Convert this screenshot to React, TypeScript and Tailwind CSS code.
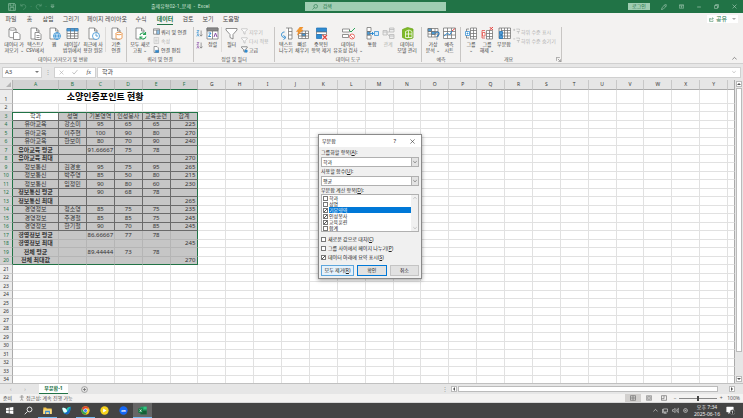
import { ReactNode } from 'react';

const COLS = 'ABCDEFGHIJKLMNOPQRSTUVWXY'.split('');

const ROWS: Record<number, string[]> = {
    3: ['학과', '성명', '기본영역', '인성봉사', '교육훈련', '합계'],
    4: ['유아교육', '강소미', '95', '65', '65', '225'],
    5: ['유아교육', '이주현', '100', '90', '80', '270'],
    6: ['유아교육', '한보미', '80', '70', '90', '240'],
    7: ['유아교육 평균', '', '91.66667', '75', '78', ''],
    8: ['유아교육 최대', '', '', '', '', '270'],
    9: ['정보통신', '김경호', '95', '75', '95', '265'],
    10: ['정보통신', '박주영', '85', '50', '80', '215'],
    11: ['정보통신', '임정민', '90', '80', '60', '230'],
    12: ['정보통신 평균', '', '90', '68', '78', ''],
    13: ['정보통신 최대', '', '', '', '', '265'],
    14: ['경영정보', '정소영', '85', '75', '75', '235'],
    15: ['경영정보', '주경철', '85', '85', '75', '245'],
    16: ['경영정보', '한기철', '90', '70', '85', '245'],
    17: ['경영정보 평균', '', '86.66667', '77', '78', ''],
    18: ['경영정보 최대', '', '', '', '', '245'],
    19: ['전체 평균', '', '89.44444', '73', '78', ''],
    20: ['전체 최대값', '', '', '', '', '270'],
};

const SUMMARY_ROWS = [7, 8, 12, 13, 17, 18, 19, 20];

const cx = (...classes: (string | false)[]) => classes.filter(Boolean).join(' ');

function Icon({ children, className = 'w-[13px] h-[13px]' }: { children: ReactNode; className?: string }) {
    return (
        <svg viewBox="0 0 26 26" className={cx('shrink-0', className)} fill="none" stroke="#707070" strokeWidth="1.5">
            {children}
        </svg>
    );
}

const Sheet = () => <path d="M4 2h11l5 5v17H4zM15 2v6h5" fill="#fff" />;

const icons = {
    database: (
        <Icon>
            <path d="M2 4v15c0 3 14 3 14 0V4" fill="#fff" />
            <ellipse cx="9" cy="4" rx="7" ry="2.5" fill="#fff" />
            <path d="M11 11h9l4 4v10H11z" fill="#fff" />
        </Icon>
    ),
    text: (
        <Icon>
            <Sheet />
            <path d="M12 11h8l4 4v10H12zM15 17h6M15 21h6" fill="#fff" />
        </Icon>
    ),
    web: (
        <Icon>
            <Sheet />
            <circle cx="18" cy="18" r="7" fill="#d9ecfa" stroke="#2e8bd0" />
            <path d="M11 18h14M18 11c-4 4-4 10 0 14c4-4 4-10 0-14" stroke="#2e8bd0" />
        </Icon>
    ),
    table: (
        <Icon>
            <path d="M2 3h22v20H2z" fill="#fff" />
            <path d="M2 3h22v5H2z" fill="#4a9bd8" stroke="#3a83bd" />
            <path d="M2 13h22M2 18h22M9 3v20M17 3v20" />
        </Icon>
    ),
    recent: (
        <Icon>
            <Sheet />
            <circle cx="18" cy="18" r="7" fill="#fff" stroke="#2e8bd0" />
            <path d="M18 13v5h4" stroke="#2e8bd0" />
        </Icon>
    ),
    connection: (
        <Icon>
            <Sheet />
            <path d="M12 13v9c0 3 12 3 12 0v-9" fill="#fff" stroke="#e8832a" />
            <ellipse cx="18" cy="13" rx="6" ry="2.5" fill="#fff" stroke="#e8832a" />
        </Icon>
    ),
    refresh: (
        <Icon>
            <Sheet />
            <path d="M10 10h14v15H10z" fill="#fff" stroke="none" />
            <path d="M12 16a6 6 0 0 1 11-1M24 19a6 6 0 0 1-11 2M23 10v5h-5M12 25v-5h5" stroke="#2ea35a" strokeWidth="2.2" />
        </Icon>
    ),
    sort: (
        <Icon>
            <path d="M2 2h22v22H2zM2 8h22M13 8v16" fill="#fff" />
            <path d="M2 2h22v5H2z" fill="#888" />
            <path d="M5 12h5l-5 7h5" stroke="#2e8bd0" strokeWidth="2" />
            <path d="M16 20l3-8 3 8" stroke="#8a4fa8" strokeWidth="2" />
        </Icon>
    ),
    filter: (
        <Icon>
            <path d="M2 3h22v3l-8 9v9l-6-3v-6L2 6z" fill="#fff" />
        </Icon>
    ),
    split: (
        <Icon>
            <path d="M12 2h12v22h-8M17 2v22M17 9h7M17 16h7" fill="#fff" />
            <path d="M9 10c-8 0-8 11 0 11M7 17l5 4-5 4" stroke="#2e8bd0" strokeWidth="2" />
        </Icon>
    ),
    flash: (
        <Icon>
            <path d="M5 8h20v15H5zM5 13h20M5 18h20M12 8v15M19 8v15" fill="#fff" />
            <path d="M12 13h7v5h-7z" fill="#4a9bd8" />
            <path d="M8 0h6l-4 6h4L3 16l2-7H1z" fill="#f39a2d" stroke="#e8832a" strokeWidth="1" />
        </Icon>
    ),
    duplicate: (
        <Icon>
            <path d="M3 2h20v8H3z" fill="#2e8bd0" stroke="#2473b5" />
            <path d="M3 10h20v5H3z" fill="#fff" />
            <path d="M3 15h10v8H3z" fill="#2e8bd0" stroke="#2473b5" />
            <path d="M15 16l9 9M24 16l-9 9" stroke="#e2453f" strokeWidth="2.2" />
        </Icon>
    ),
    validate: (
        <Icon>
            <path d="M1 4h14v6H1zM1 15h12v6H1z" fill="#fff" />
            <path d="M14 6l4 4 8-8" stroke="#2ea35a" strokeWidth="2" />
            <circle cx="20" cy="19" r="5" fill="#fff" stroke="#e2453f" />
            <path d="M16 16l7 7" stroke="#e2453f" />
        </Icon>
    ),
    consolidate: (
        <Icon>
            <path d="M2 1h8v8H2zM2 16h8v8H2z" fill="#fff" />
            <path d="M2 9h6v7H2z" fill="#4a9bd8" />
            <path d="M8 13h7M12 10l3 3-3 3" stroke="#2e8bd0" strokeWidth="2" />
            <path d="M17 9h8v8h-8z" fill="#d9ecfa" stroke="#2e8bd0" />
        </Icon>
    ),
    relation: (
        <Icon>
            <g stroke="#b5b5b5">
                <path d="M2 7h8v9H2zM2 10h8M15 2h9v8h-9zM15 5h9M15 15h9v8h-9zM15 18h9M10 10h5M10 13l5 6" fill="#eee" />
            </g>
        </Icon>
    ),
    model: (
        <Icon>
            <path d="M3 5l10-4 11 3v18l-11 3-10-4z" fill="#7fba28" stroke="#6aa31c" />
            <path d="M9 9l7-3 6 3v12H9zM9 14h13M15 7v14" stroke="#fff" strokeWidth="1.5" />
        </Icon>
    ),
    whatif: (
        <Icon>
            <path d="M2 3h20v17H2zM2 9h20M2 14h20M9 3v17M16 3v17" fill="#fff" />
            <path d="M2 3h7v6H2zM9 9h7v6H9z" fill="#4a9bd8" />
            <path d="M17 13c0-4 8-4 7 1c0 3-4 3-4 6M20 23v2" stroke="#2473b5" strokeWidth="2.2" />
        </Icon>
    ),
    forecast: (
        <Icon>
            <path d="M1 2h24v21H1zM1 9h24M1 16h24M9 2v21M17 2v21" fill="#fff" />
            <path d="M2 18l7-6 4 4 5-8" stroke="#2e8bd0" strokeWidth="2" />
            <path d="M18 8l6-5" stroke="#e2453f" strokeWidth="2" />
        </Icon>
    ),
    group: (
        <Icon>
            <path d="M11 2h12v22H11zM11 7h12M11 13h12M11 19h12M17 2v22" fill="#fff" />
            <path d="M8 4H3v18h5" />
            <path d="M1 9h8v8H1z" fill="#fff" stroke="#2e8bd0" />
            <path d="M3 13h4M5 11v4" stroke="#2e8bd0" />
        </Icon>
    ),
    ungroup: (
        <Icon>
            <path d="M11 7h12v17H11zM11 13h12M11 19h12M17 7v17" fill="#fff" />
            <path d="M8 7H2v15h6" stroke="#e2453f" />
            <path d="M3 11h5v7H3z" fill="#fff" stroke="#e2453f" />
            <path d="M17 0l7 6M24 0l-7 6" stroke="#e2453f" strokeWidth="2" />
        </Icon>
    ),
    subtotal: (
        <Icon>
            <path d="M7 2h18v21H7zM7 7h18M7 12h18M7 18h18M13 2v21M19 2v21" fill="#fff" />
            <path d="M7 2H2v21h5" />
            <path d="M3 9h6v6H3zM3 17h6v6H3z" fill="#4a9bd8" stroke="#2473b5" />
        </Icon>
    ),
};

function BigButton({ icon, lines, width, muted = false }: { icon: ReactNode; lines: string[]; width: string; muted?: boolean }) {
    return (
        <button className={cx('flex flex-col items-center shrink-0 whitespace-nowrap leading-[6px]', width, muted ? 'text-[#b0b0b0]' : 'text-[#444]')}>
            <span className="mb-[1px]">{icon}</span>
            {lines.map((line) => (
                <span key={line}>{line}</span>
            ))}
        </button>
    );
}

function SmallButton({ icon, label, muted = false }: { icon: ReactNode; label: string; muted?: boolean }) {
    return (
        <button className={cx('flex items-center gap-[1px] h-[9px] whitespace-nowrap', muted ? 'text-[#b0b0b0]' : 'text-[#444]')}>
            {icon}
            {label}
        </button>
    );
}

function Group({ title, width, children, launcher = false }: { title: string; width: string; children: ReactNode; launcher?: boolean }) {
    return (
        <section className={cx('flex flex-col shrink-0 justify-between border-r border-[#c8c6c4]', width)}>
            <div className="flex">{children}</div>
            <div className="flex items-center justify-center leading-[6px] text-[#555]">
                <span className={launcher ? 'flex-1 text-center' : ''}>{title}</span>
                {launcher && (
                    <Icon className="w-[5px] h-[5px]">
                        <path d="M2 20V2h18M10 10l13 13M24 12v12H12" strokeWidth="3" />
                    </Icon>
                )}
            </div>
        </section>
    );
}

const small = 'w-[7px] h-[7px]';

function SortArrow({ down }: { down: boolean }) {
    return (
        <Icon className={small}>
            <path d={down ? 'M3 2h8l-8 9h8M3 24l4-9 4 9' : 'M3 24l4-9 4 9M3 2h8l-8 9h8'} stroke={down ? '#2e8bd0' : '#8a4fa8'} strokeWidth="2.5" />
            <path d="M19 2v20M14 17l5 6 5-6" strokeWidth="2.5" />
        </Icon>
    );
}

function FilterIcon({ muted, dot }: { muted: boolean; dot?: boolean }) {
    return (
        <Icon className={small}>
            <path d="M2 3h21v3l-8 8v9l-5-3v-6L2 6z" stroke={muted ? '#b5b5b5' : '#555'} fill="#fff" strokeWidth="2.5" />
            {dot && <circle cx="19" cy="19" r="6" fill="#2e8bd0" stroke="none" />}
        </Icon>
    );
}

function DetailIcon({ plus }: { plus: boolean }) {
    return (
        <Icon className={small}>
            <path d={plus ? 'M1 7h7M4.500 3v8M12 4h12v5M14 13h11M20 13v8' : 'M1 7h7M12 4h12v5M14 13h11M20 13v8'} stroke="#b5b5b5" strokeWidth="2.5" />
        </Icon>
    );
}

function TitleBar() {
    return (
        <header className="relative flex items-center h-[13px] bg-[#217346] text-[#d3e5da] px-2">
            <Icon className="w-[8px] h-[8px]">
                <path d="M2 2h20l2 2v20H2zM7 2v8h12V2M7 24v-9h12v9" stroke="#8fc0a4" strokeWidth="2.4" />
            </Icon>
            <Icon className="w-[7px] h-[7px] ml-[4px]">
                <path d="M3 3v8h8M3 11C10 2 24 6 21 16c-1 4-5 7-9 8" stroke="#5b9c78" strokeWidth="2.6" />
            </Icon>
            <span className="w-[8px] text-center text-[#5b9c78]">-</span>
            <Icon className="w-[7px] h-[7px]">
                <path d="M23 3v8h-8M23 11C16 2 2 6 5 16c1 4 5 7 9 8" stroke="#5b9c78" strokeWidth="2.6" />
            </Icon>
            <span className="w-[8px] text-center text-[#5b9c78]">-</span>
            <Icon className="w-[5px] h-[5px]">
                <path d="M4 5h18M5 12h16l-8 9z" stroke="#b5d5c3" strokeWidth="2.6" />
            </Icon>
            <h1 className="ml-[96px] whitespace-nowrap">출제유형02-1_문제&nbsp; -&nbsp; Excel</h1>
            <label className="absolute left-[41%] w-[19%] flex items-center gap-[5px] h-[9px] bg-[#9fcdb2] px-[7px]">
                <Icon className="w-[6px] h-[6px]">
                    <circle cx="16" cy="10" r="8" stroke="#217346" strokeWidth="2.5" />
                    <path d="M10 16l-8 8" stroke="#217346" strokeWidth="2.5" />
                </Icon>
                <input type="text" aria-label="검색" placeholder="검색" className="w-full min-w-0 bg-transparent outline-none placeholder:text-[#217346]" />
            </label>
            <div className="ml-auto flex items-center">
                <button className="w-[22px] h-[7px] mr-[11px] bg-[#9fcdb2] text-[#217346] flex items-center justify-center">로그인</button>
                <button aria-label="펜" className="mr-[12px]">
                    <Icon className="w-[6px] h-[6px] block">
                        <path d="M2 24l3-9L17 3l6 0-1 7-12 12zM14 6l6 6" stroke="#b5d5c3" strokeWidth="2.4" />
                    </Icon>
                </button>
                <button aria-label="리본 메뉴" className="mr-[13px]">
                    <Icon className="w-[5px] h-[5px] block">
                        <path d="M2 4h22v18H2zM2 9h22M13 20v-8M9 15l4-3 4 3" stroke="#b5d5c3" strokeWidth="2.6" />
                    </Icon>
                </button>
                <button aria-label="최소화" className="mr-[13px]">
                    <Icon className="w-[4px] h-[4px] block">
                        <path d="M1 13h24" stroke="#b5d5c3" strokeWidth="4" />
                    </Icon>
                </button>
                <button aria-label="이전 크기로" className="mr-[13px]">
                    <Icon className="w-[5px] h-[5px] block">
                        <path d="M3 8h15v15H3zM8 8V3h15v15h-5" stroke="#b5d5c3" strokeWidth="3" />
                    </Icon>
                </button>
                <button aria-label="닫기" className="-mr-[2px]">
                    <Icon className="w-[5px] h-[5px] block">
                        <path d="M3 3l20 20M23 3L3 23" stroke="#b5d5c3" strokeWidth="3" />
                    </Icon>
                </button>
            </div>
        </header>
    );
}

const tabs = [
    { name: '파일', width: 'w-[20px]' },
    { name: '홈', width: 'w-[17px]' },
    { name: '삽입', width: 'w-[20px]' },
    { name: '그리기', width: 'w-[26px]' },
    { name: '페이지 레이아웃', width: 'w-[46px]' },
    { name: '수식', width: 'w-[22px]' },
    { name: '데이터', width: 'w-[26px]' },
    { name: '검토', width: 'w-[20px]' },
    { name: '보기', width: 'w-[20px]' },
    { name: '도움말', width: 'w-[26px]' },
];

function Tabs() {
    return (
        <nav className="flex items-center h-[12px] px-[1px] text-[6px] text-[#444]">
            {tabs.map((tab) => (
                <button key={tab.name} className={cx('h-full flex justify-center whitespace-nowrap', tab.width)}>
                    <span className={cx('h-full leading-[12px]', tab.name === '데이터' && 'border-b border-[#217346] text-[#217346] font-bold')}>{tab.name}</span>
                </button>
            ))}
            <button className="ml-auto mr-[4px] flex items-center gap-[2px] h-[8px] px-[2px] bg-white text-[#217346] whitespace-nowrap">
                <Icon className="w-[5px] h-[5px]">
                    <path d="M10 8H3v15h18v-6M9 17c0-6 4-9 12-9M17 3l6 5-6 5" stroke="#217346" strokeWidth="2.5" />
                </Icon>
                공유
                <span className="ml-[3px] border-x-2 border-t-2 border-x-transparent border-t-[#aaa]" />
            </button>
        </nav>
    );
}

function Ribbon() {
    return (
        <div className="flex h-[38px] pt-[2px] pb-[1px] leading-[6px]">
            <Group title="데이터 가져오기 및 변환" width="w-[127px]">
                <div className="flex pl-[3px]">
                    <BigButton icon={icons.database} lines={['데이터 가', '져오기 ⌄']} width="w-[22px]" />
                    <BigButton icon={icons.text} lines={['텍스트/', 'CSV에서']} width="w-[20px]" />
                    <BigButton icon={icons.web} lines={['웹']} width="w-[18px]" />
                    <BigButton icon={icons.table} lines={['테이블/', '범위에서']} width="w-[18px]" />
                    <BigButton icon={icons.recent} lines={['최근에 사', '용한 원본']} width="w-[24px]" />
                    <div className="h-[25px] border-l border-[#dddbd9]" />
                    <BigButton icon={icons.connection} lines={['기존', '연결']} width="w-[20px]" />
                </div>
            </Group>
            <Group title="쿼리 및 연결" width="w-[67px]">
                <BigButton icon={icons.refresh} lines={['모두 새로', '고침 ⌄']} width="w-[26px]" />
                <div>
                    <SmallButton
                        icon={
                            <Icon className={small}>
                                <path d="M2 3h22v20H2zM2 8h22M14 8v15" strokeWidth="2.5" fill="#fff" />
                                <path d="M14 8h10v15H14z" fill="#8cc0e8" />
                            </Icon>
                        }
                        label="쿼리 및 연결"
                    />
                    <SmallButton
                        muted
                        icon={
                            <Icon className={small}>
                                <path d="M4 2h17v22H4zM8 8h9M8 13h9M8 18h9" stroke="#b5b5b5" strokeWidth="2" />
                            </Icon>
                        }
                        label="속성"
                    />
                    <SmallButton
                        icon={
                            <Icon className={small}>
                                <path d="M4 2h11l5 5v17H4z" strokeWidth="2.5" fill="#fff" />
                                <path d="M9 16h12v8H9z" fill="#2e8bd0" stroke="#2473b5" />
                            </Icon>
                        }
                        label="연결 편집"
                    />
                </div>
            </Group>
            <Group title="정렬 및 필터" width="w-[81px]">
                <div className="flex flex-col gap-[5px] pt-[3px] pl-[2px] w-[10px]">
                    <SortArrow down />
                    <SortArrow down={false} />
                </div>
                <BigButton icon={icons.sort} lines={['정렬']} width="w-[17px]" />
                <div className="h-[25px] border-l border-[#dddbd9]" />
                <BigButton icon={icons.filter} lines={['필터']} width="w-[19px]" />
                <div>
                    <SmallButton muted icon={<FilterIcon muted />} label="지우기" />
                    <SmallButton muted icon={<FilterIcon muted />} label="다시 적용" />
                    <SmallButton icon={<FilterIcon muted={false} dot />} label="고급" />
                </div>
            </Group>
            <Group title="데이터 도구" width="w-[147px]">
                <div className="flex pl-[3px]">
                    <BigButton icon={icons.split} lines={['텍스트', '나누기']} width="w-[16px]" />
                    <BigButton icon={icons.flash} lines={['빠른', '채우기']} width="w-[16px]" />
                    <BigButton icon={icons.duplicate} lines={['중복된', '항목 제거']} width="w-[22px]" />
                    <BigButton icon={icons.validate} lines={['데이터', '유효성 검사 ⌄']} width="w-[32px]" />
                    <BigButton icon={icons.consolidate} lines={['통합']} width="w-[16px]" />
                    <BigButton icon={icons.relation} lines={['관계']} width="w-[16px]" muted />
                    <BigButton icon={icons.model} lines={['데이터', '모델 관리']} width="w-[22px]" />
                </div>
            </Group>
            <Group title="예측" width="w-[39px]">
                <div className="flex pl-[3px]">
                    <BigButton icon={icons.whatif} lines={['가상', '분석 ⌄']} width="w-[16px]" />
                    <BigButton icon={icons.forecast} lines={['예측', '시트']} width="w-[16px]" />
                </div>
            </Group>
            <Group title="개요" width="w-[101px]" launcher>
                <div className="flex pl-[2px]">
                    <BigButton icon={icons.group} lines={['그룹', '⌄']} width="w-[16px]" />
                    <BigButton icon={icons.ungroup} lines={['그룹', '해제 ⌄']} width="w-[16px]" />
                    <BigButton icon={icons.subtotal} lines={['부분합']} width="w-[18px]" />
                    <div>
                        <SmallButton muted icon={<DetailIcon plus />} label="하위 수준 표시" />
                        <SmallButton muted icon={<DetailIcon plus={false} />} label="하위 수준 숨기기" />
                    </div>
                </div>
            </Group>
            <button aria-label="리본 축소" className="ml-auto self-end pr-[6px] pb-[1px]">
                <Icon className="w-[5px] h-[5px] block">
                    <path d="M2 18L13 7l11 11" strokeWidth="4" />
                </Icon>
            </button>
        </div>
    );
}

function FormulaBar() {
    return (
        <div className="flex items-center shrink-0 h-[17px] px-[2px] bg-[#e6e6e6] border-t border-[#d0d0d0] text-[6px] text-[#444]">
            <div className="flex items-center w-[40px] h-[11px] bg-white border border-[#d0d0d0] px-[2px]">
                <input aria-label="이름 상자" defaultValue="A3" className="min-w-0 flex-1 outline-none" />
                <span className="border-x-2 border-t-2 border-x-transparent border-t-[#777]" />
            </div>
            <span className="w-[12px] text-center text-[#999]">⋮</span>
            <div className="flex items-center justify-around w-[42px] h-[11px] bg-white border border-[#d0d0d0]">
                <button aria-label="취소">
                    <Icon className="w-[5px] h-[5px] block">
                        <path d="M3 3l20 20M23 3L3 23" stroke="#aaa" strokeWidth="3" />
                    </Icon>
                </button>
                <button aria-label="입력">
                    <Icon className="w-[6px] h-[6px] block">
                        <path d="M2 14l7 8L24 4" stroke="#aaa" strokeWidth="3" />
                    </Icon>
                </button>
                <button className="font-['Liberation_Serif'] italic">fx</button>
            </div>
            <div className="flex items-center flex-1 h-[11px] ml-[1px] px-[4px] bg-white border border-[#d0d0d0]">
                <input aria-label="수식 입력줄" defaultValue="학과" className="min-w-0 flex-1 outline-none" />
                <Icon className="w-[4px] h-[4px]">
                    <path d="M2 8l11 10L24 8" stroke="#aaa" strokeWidth="4" />
                </Icon>
            </div>
        </div>
    );
}

function cellClass(row: number, col: number) {
    const inside = row >= 3 && row <= 20 && col < 6;
    if (!inside) {
        return 'border-r border-b border-[#e1e1e1]';
    }
    return cx(
        'border-r border-b',
        row === 3 && col === 0 ? 'bg-white' : 'bg-[#c6c6c6]',
        row <= 16 ? 'border-[#6a6a6a]' : 'border-[#b5b5b5]',
        row === 20 && 'border-b-[#217346]',
        row === 3 && 'border-t border-t-[#217346]',
        col === 5 && 'border-r-[#217346]',
        col === 5 && row > 3 ? 'text-right pr-[2px]' : 'text-center',
        col === 0 && SUMMARY_ROWS.includes(row) && 'font-bold'
    );
}

function Grid() {
    const rows = Array.from({ length: 34 }, (_, i) => i + 1);

    return (
        <table className="w-full table-fixed border-separate border-spacing-0 bg-white text-[#333]">
            <colgroup>
                <col className="w-[13px]" />
                <col className="w-[46px]" />
                {COLS.slice(1).map((c) => (
                    <col key={c} />
                ))}
                <col className="w-[7px]" />
            </colgroup>
            <thead>
                <tr className="h-[10px] bg-[#e6e6e6] text-[5px] leading-[7px]">
                    <th className="border-r border-b border-[#b5b5b5]">
                        <span className="block ml-auto mr-[1px] w-[5px] h-[5px] bg-[#b5b5b5] [clip-path:polygon(100%_0,100%_100%,0_100%)]" />
                    </th>
                    {COLS.map((c, i) => (
                        <th key={c} className={cx('font-normal border-r border-b', i < 6 ? 'bg-[#d2d2d2] text-[#217346] border-r-[#bbb] border-b-[#217346]' : 'border-r-[#c8c8c8] border-b-[#aaa]')}>
                            {c}
                        </th>
                    ))}
                    <th className="border-b border-r border-[#aaa]" />
                </tr>
            </thead>
            <tbody className="text-[6px] leading-[7px]">
                {rows.map((r) => (
                    <tr key={r} className={r === 1 ? 'h-[14px]' : r % 2 ? 'h-[9px]' : 'h-[8px]'}>
                        <th
                            className={cx(
                                'font-normal text-[5px] border-b border-r align-bottom',
                                r >= 3 && r <= 20 ? 'bg-[#d2d2d2] text-[#217346] border-b-[#bbb] border-r-[#217346]' : 'bg-[#ececec] border-b-[#ccc] border-r-[#aaa]'
                            )}
                        >
                            {r}
                        </th>
                        {r === 1 && (
                            <td colSpan={6} className="text-center font-bold text-[9px] leading-[12px] text-black border-r border-b border-[#e1e1e1]">
                                소양인증포인트 현황
                            </td>
                        )}
                        {COLS.map((c, i) =>
                            r === 1 && i < 6 ? null : (
                                <td key={c} className={cx('whitespace-nowrap', cellClass(r, i))}>
                                    {i < 6 && ROWS[r] ? ROWS[r][i] : ''}
                                </td>
                            )
                        )}
                        <td className="border-b border-r border-b-[#e1e1e1] border-r-[#aaa]" />
                    </tr>
                ))}
            </tbody>
        </table>
    );
}

function VerticalScroll() {
    return (
        <div className="flex flex-col w-[8px] shrink-0 p-[1px] bg-[#e6e6e6]">
            <button aria-label="위로" className="h-[6px] bg-white border border-[#bbb] flex items-center justify-center">
                <span className="border-x-2 border-b-2 border-x-transparent border-b-[#555]" />
            </button>
            <div className="flex-1 mt-[1px] mb-[24px] bg-white border border-[#bbb]" />
            <button aria-label="아래로" className="h-[6px] bg-white border border-[#bbb] flex items-center justify-center">
                <span className="border-x-2 border-t-2 border-x-transparent border-t-[#555]" />
            </button>
        </div>
    );
}

function Dropdown({ id, label, hotkey, value }: { id: string; label: string; hotkey: string; value: string }) {
    return (
        <div className="mb-[1px]">
            <label htmlFor={id} className="block leading-[7px] mb-[1px]">
                {label}(<u>{hotkey}</u>):
            </label>
            <div className="flex h-[10px] bg-white border border-[#b0b0b0]">
                <select id={id} className="appearance-none flex-1 min-w-0 pl-[1px] leading-[8px] outline-none">
                    <option>{value}</option>
                </select>
                <span className="w-[7px] bg-[#e3e3e3] border-l border-[#b0b0b0] flex items-center justify-center">
                    <Icon className="w-[4px] h-[4px]">
                        <path d="M2 8l11 10L24 8" stroke="#555" strokeWidth="4" />
                    </Icon>
                </span>
            </div>
        </div>
    );
}

const checkbox =
    'appearance-none shrink-0 w-[5px] h-[5px] bg-white border border-[#777] checked:bg-[linear-gradient(135deg,transparent_40%,#555_40%,#555_60%,transparent_60%)]';

const fields = [
    { name: '학과', checked: false },
    { name: '성명', checked: false },
    { name: '기본영역', checked: true, selected: true },
    { name: '인성봉사', checked: true },
    { name: '교육훈련', checked: true },
    { name: '합계', checked: false },
];

const options = [
    { name: '새로운 값으로 대치', hotkey: 'C', checked: false },
    { name: '그룹 사이에서 페이지 나누기', hotkey: 'P', checked: false },
    { name: '데이터 아래에 요약 표시', hotkey: 'S', checked: true },
];

function SubtotalDialog() {
    return (
        <div role="dialog" aria-label="부분합" className="absolute left-[318px] top-[134px] w-[104px] bg-[#f0f0f0] border border-[#8a8a8a] shadow-[0_1px_4px_rgba(0,0,0,0.4)] text-[#222]">
            <div className="flex items-center h-[12px] bg-white pl-[3px] pr-[6px]">
                <h2 className="flex-1">부분합</h2>
                <button aria-label="도움말" className="mr-[14px] text-[6px]">
                    ?
                </button>
                <button aria-label="닫기">
                    <Icon className="w-[5px] h-[5px] block">
                        <path d="M2 2l22 22M24 2L2 24" stroke="#333" strokeWidth="3" />
                    </Icon>
                </button>
            </div>
            <div className="px-[2px] pt-[2px] pb-[2px]">
                <Dropdown id="group-by" label="그룹화할 항목" hotkey="A" value="학과" />
                <Dropdown id="function" label="사용할 함수" hotkey="U" value="평균" />
                <p className="leading-[7px]">
                    부분합 계산 항목(<u>D</u>):
                </p>
                <div className="flex bg-white border border-[#b0b0b0]">
                    <ul className="flex-1 pl-[1px]">
                        {fields.map((f) => (
                            <li key={f.name}>
                                <label className="flex items-center gap-[1px] h-[6px] leading-[6px]">
                                    <input type="checkbox" defaultChecked={f.checked} className={checkbox} />
                                    <span className={cx('flex-1', !!f.selected && 'bg-[#0078d7] text-white')}>{f.name}</span>
                                </label>
                            </li>
                        ))}
                    </ul>
                    <div className="flex flex-col justify-between items-center w-[7px] py-[1px] bg-[#f0f0f0]">
                        <Icon className="w-[4px] h-[4px]">
                            <path d="M2 18L13 8l11 10" stroke="#aaa" strokeWidth="4" />
                        </Icon>
                        <Icon className="w-[4px] h-[4px]">
                            <path d="M2 8l11 10L24 8" stroke="#aaa" strokeWidth="4" />
                        </Icon>
                    </div>
                </div>
                <div className="pt-[3px] pb-[3px]">
                    {options.map((o) => (
                        <label key={o.name} className="flex items-center gap-[2px] h-[9px] whitespace-nowrap">
                            <input type="checkbox" defaultChecked={o.checked} className={checkbox} />
                            <span>
                                {o.name}(<u>{o.hotkey}</u>)
                            </span>
                        </label>
                    ))}
                </div>
                <div className="flex gap-[3px] h-[11px]">
                    <button className="w-[33px] bg-[#e5f1fb] border border-[#5ea6dc] whitespace-nowrap">
                        모두 제거(<u>R</u>)
                    </button>
                    <button className="flex-1 bg-[#e1e1e1] border border-[#0078d7]">확인</button>
                    <button className="flex-1 bg-[#e1e1e1] border border-[#c4c4c4]">취소</button>
                </div>
            </div>
        </div>
    );
}

function SheetTabs() {
    return (
        <div className="flex items-center shrink-0 h-[11px] bg-[#e6e6e6] border-t border-[#c0c0c0] text-[#999]">
            <button aria-label="이전 시트" className="w-[11px] pl-[10px]">
                ‹
            </button>
            <button aria-label="다음 시트" className="w-[28px]">
                ›
            </button>
            <button className="w-[29px] h-full bg-white border-b border-[#217346] text-[#217346] font-bold whitespace-nowrap">부분합-1</button>
            <button aria-label="새 시트" className="ml-[13px]">
                <Icon className="w-[7px] h-[7px] block">
                    <circle cx="13" cy="13" r="11" strokeWidth="2" />
                    <path d="M13 7v12M7 13h12" strokeWidth="3" />
                </Icon>
            </button>
            <span className="ml-auto text-[6px] mr-[3px]">⋮</span>
            <div className="flex w-[39%] h-[6px] mr-[2px]">
                <button aria-label="왼쪽" className="w-[6px] bg-white border border-[#bbb] flex items-center justify-center">
                    <span className="border-y-2 border-r-2 border-y-transparent border-r-[#555]" />
                </button>
                <div className="flex-1 ml-[1px] mr-[11px] bg-white border border-[#bbb]" />
                <button aria-label="오른쪽" className="w-[6px] mr-[6px] bg-white border border-[#bbb] flex items-center justify-center">
                    <span className="border-y-2 border-l-2 border-y-transparent border-l-[#555]" />
                </button>
            </div>
        </div>
    );
}

function StatusBar() {
    return (
        <div className="flex items-center shrink-0 h-[9px] pl-[3px] pr-[3px] bg-[#f3f2f1] text-[#555] border-b border-[#d8d8d8]">
            <span className="w-[16px]">준비</span>
            <Icon className="w-[6px] h-[6px] mr-[1px]">
                <circle cx="12" cy="4" r="3" strokeWidth="2" />
                <path d="M3 9h18M12 9v7l-5 9M12 16l5 9" strokeWidth="2.5" />
            </Icon>
            <span>접근성: 계속 진행 가능</span>
            <div className="ml-auto flex items-center h-full">
                <button aria-label="기본" className="w-[16px] h-full bg-[#d2d0ce] flex items-center justify-center">
                    <Icon className="w-[6px] h-[6px]">
                        <path d="M2 3h22v20H2zM2 13h22M13 3v20" strokeWidth="3" />
                    </Icon>
                </button>
                <button aria-label="페이지 레이아웃" className="w-[16px] flex items-center justify-center">
                    <Icon className="w-[6px] h-[6px]">
                        <path d="M2 3h22v20H2zM7 7h12v12H7zM9 13h8" strokeWidth="2.5" />
                    </Icon>
                </button>
                <button aria-label="페이지 나누기" className="w-[14px] flex items-center justify-center">
                    <Icon className="w-[6px] h-[6px]">
                        <path d="M2 3h22v20H2zM2 16h11V3" strokeWidth="3" />
                    </Icon>
                </button>
                <button aria-label="축소" className="w-[8px]">
                    −
                </button>
                <input
                    type="range"
                    aria-label="확대/축소"
                    defaultValue={50}
                    className="appearance-none w-[38px] h-[1px] bg-[#888] [&::-webkit-slider-thumb]:appearance-none [&::-webkit-slider-thumb]:w-[2px] [&::-webkit-slider-thumb]:h-[5px] [&::-webkit-slider-thumb]:bg-[#444]"
                />
                <button aria-label="확대" className="w-[8px]">
                    +
                </button>
                <span className="ml-[2px]">100%</span>
            </div>
        </div>
    );
}

const apps = [
    {
        name: '시작',
        icon: <path d="M3 6l8-1v7H3zM13 4l11-1v9H13zM3 14h8v7l-8-1zM13 14h11v9l-11-1z" fill="#fff" stroke="none" />,
    },
    {
        name: '검색',
        icon: <path d="M10 16L2 24M9 10a7 7 0 1 0 14 0a7 7 0 1 0-14 0" stroke="#fff" strokeWidth="2.4" />,
    },
    {
        name: '파일 탐색기',
        open: true,
        icon: (
            <g stroke="none">
                <path d="M1 4h8l2 3h14v16H1z" fill="#f5c54a" />
                <path d="M1 10h24v13H1z" fill="#fbdc83" />
                <path d="M6 14h14v9h-3v-5H9v5H6z" fill="#3d8fd1" />
            </g>
        ),
    },
    {
        name: '웨일',
        icon: (
            <g stroke="none">
                <path d="M1 6c6-3 10 0 12 4c1-5 5-8 12-8c0 14-5 22-12 22C5 24 1 14 1 6z" fill="#22c3b5" />
                <path d="M1 6c6-2 10 1 14 9c-3 5-8 4-10 2C2 13 1 9 1 6z" fill="#e9fbff" />
                <path d="M25 2c0 14-5 22-12 22c-3 0-5-1-7-3c9-1 12-8 19-19z" fill="#1763c8" />
            </g>
        ),
    },
    {
        name: 'Chrome',
        open: true,
        icon: (
            <g stroke="none">
                <circle cx="13" cy="13" r="12" fill="#f7c81e" />
                <path d="M2.6 7A12 12 0 0 1 23.4 7H13l-5 9z" fill="#e24335" />
                <path d="M2.6 7A12 12 0 0 0 13 25l5-9H8z" fill="#2fa351" />
                <circle cx="13" cy="13" r="6" fill="#fff" />
                <circle cx="13" cy="13" r="4.5" fill="#3f80ee" />
            </g>
        ),
    },
    {
        name: '팟플레이어',
        icon: (
            <g stroke="none">
                <circle cx="13" cy="13" r="12" fill="#f7d21c" />
                <path d="M9 7l10 6-10 6z" fill="#fff" />
            </g>
        ),
    },
    {
        name: 'Zoom',
        icon: (
            <g stroke="none">
                <circle cx="13" cy="13" r="12" fill="#1668f5" />
                <text x="13" y="16" fontSize="9" fontWeight="bold" fill="#fff" textAnchor="middle">
                    zm
                </text>
            </g>
        ),
    },
    {
        name: 'Excel',
        open: true,
        active: true,
        icon: (
            <g stroke="none">
                <path d="M7 2h18v22H7z" fill="#21a366" />
                <path d="M16 2h9v7h-9z" fill="#33c481" />
                <path d="M7 13h18v11H7z" fill="#185c37" />
                <path d="M1 7h13v13H1z" fill="#107c41" />
                <path d="M5 10l5 7M10 10l-5 7" stroke="#fff" strokeWidth="2" />
            </g>
        ),
    },
];

function Taskbar() {
    return (
        <footer className="flex items-stretch shrink-0 h-[15px] bg-[#444] text-[#eee]">
            {apps.map((app) => (
                <button
                    key={app.name}
                    aria-label={app.name}
                    className={cx(
                        'w-[19px] flex items-center justify-center border-b',
                        app.open ? 'border-[#76b9ed]' : 'border-transparent',
                        !!app.active && 'bg-[#666]'
                    )}
                >
                    <Icon className="w-[9px] h-[9px]">{app.icon}</Icon>
                </button>
            ))}
            <div className="ml-auto flex items-center gap-[4px] pr-[8px]">
                <Icon className="w-[5px] h-[5px]">
                    <path d="M2 18L13 7l11 11" stroke="#eee" strokeWidth="3" />
                </Icon>
                <Icon className="w-[6px] h-[6px]">
                    <path d="M6 4h18v13H6zM2 4v17h12v-4M10 23h10" stroke="#eee" strokeWidth="2.5" />
                </Icon>
                <Icon className="w-[7px] h-[7px]">
                    <path d="M2 10h4l5-5v16l-5-5H2zM15 9q3 4 0 8M19 6q5 7 0 14M23 3q6 10 0 20" stroke="#eee" strokeWidth="2" />
                </Icon>
                <Icon className="w-[5px] h-[5px]">
                    <circle cx="13" cy="13" r="10" stroke="#eee" strokeWidth="3" />
                    <path d="M7 13h12M13 8v10" stroke="#eee" strokeWidth="2" />
                </Icon>
                <div className="w-[30px] text-center leading-[7px] whitespace-nowrap">
                    <p>오후 7:34</p>
                    <p>2025-06-16</p>
                </div>
                <Icon className="w-[9px] h-[9px]">
                    <path d="M2 3h19v14h-9l-4 5v-5H2z" fill="#fff" stroke="#fff" />
                    <circle cx="19" cy="18" r="7" fill="#333" stroke="#999" />
                    <path d="M17 16l2-2v8" stroke="#fff" strokeWidth="2" />
                </Icon>
            </div>
        </footer>
    );
}

export default function App() {
    return (
        <div className="relative flex flex-col h-screen overflow-hidden bg-[#f3f2f1] text-[5px] leading-[7px] font-['Noto_Sans','Noto_Sans_CJK_KR',sans-serif]">
            <TitleBar />
            <Tabs />
            <Ribbon />
            <FormulaBar />
            <main className="flex flex-1 min-h-0 overflow-hidden bg-[#e6e6e6]">
                <div className="flex-1 min-w-0">
                    <Grid />
                </div>
                <VerticalScroll />
            </main>
            <SheetTabs />
            <StatusBar />
            <Taskbar />
            <SubtotalDialog />
        </div>
    );
}
